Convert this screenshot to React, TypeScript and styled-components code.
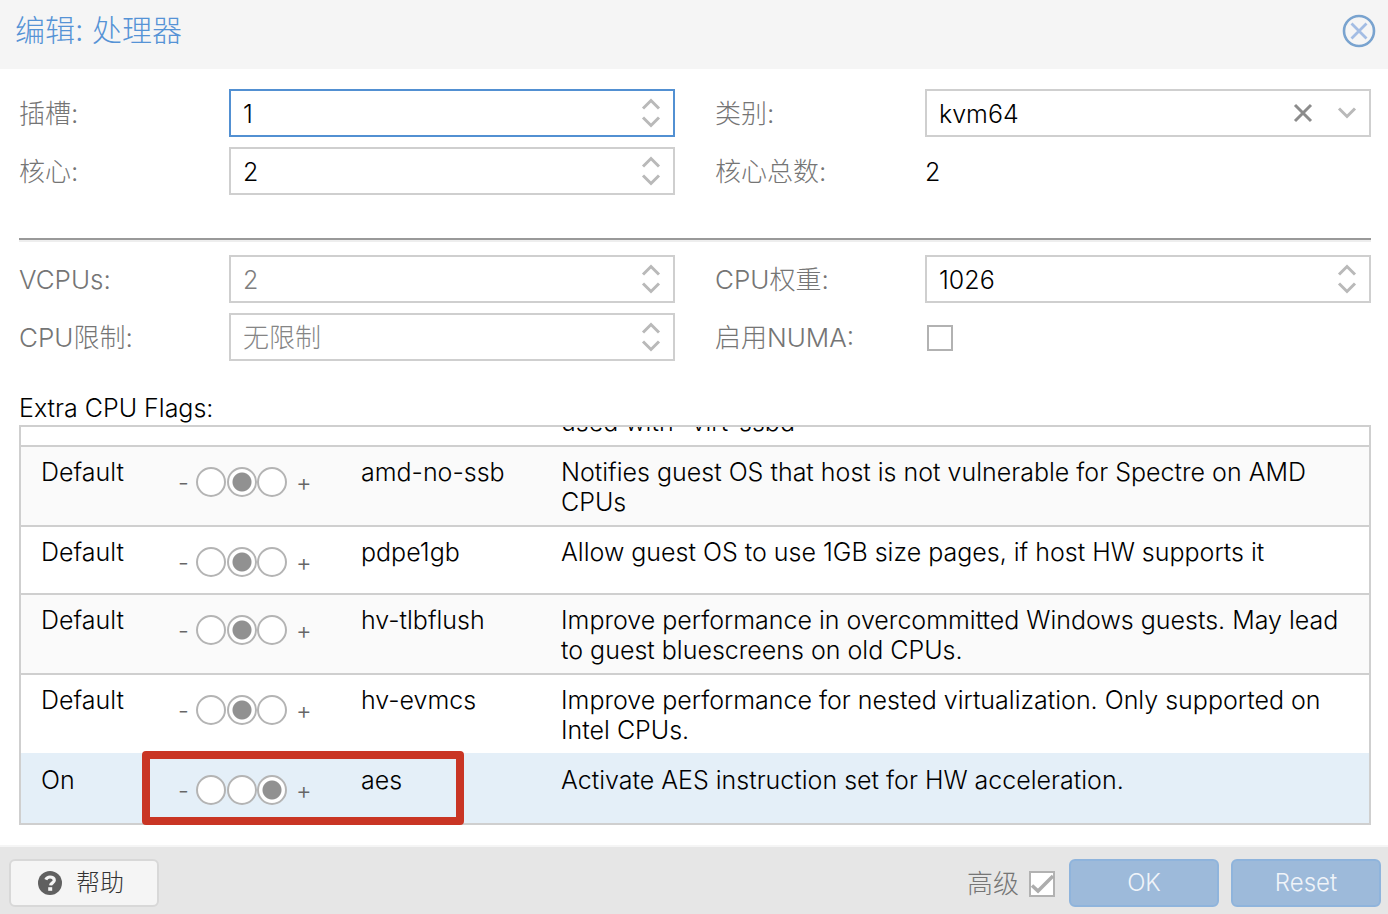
import React, { useState } from "react";
import styled, { createGlobalStyle } from "styled-components";

const GlobalStyle = createGlobalStyle`
  *, *::before, *::after { box-sizing: border-box; }
  body {
    margin: 0;
    background: #fff;
    color: #000;
    font-family: Inter, "Noto Sans CJK SC", sans-serif;
    font-size: 25px;
    font-weight: 300;
    line-height: 30px;
  }
  input, button { font: inherit; color: inherit; margin: 0; }
`;

const Dialog = styled.main`
  display: flex;
  flex-direction: column;
  min-height: 100vh;
`;

const Header = styled.header`
  display: flex;
  justify-content: space-between;
  align-items: flex-start;
  height: 69px;
  padding: 14px 12px 0 15px;
  background: #f5f5f5;
`;

const Title = styled.h1`
  margin: 0;
  font-size: 30px;
  font-weight: 300;
  line-height: 32px;
  color: #5593d6;
`;

const IconButton = styled.button`
  display: flex;
  padding: 0;
  border: 0;
  background: none;
`;

const Body = styled.div`
  flex: 1;
  padding: 20px 17px 20px 19px;
`;

const FieldGrid = styled.div`
  display: grid;
  grid-template-columns: repeat(2, minmax(0, 1fr));
  gap: 10px 40px;
`;

const Field = styled.div`
  display: flex;
  align-items: center;
  height: 48px;
`;

const FieldLabel = styled.label`
  flex: none;
  width: 210px;
  padding-top: 2px;
  font-size: 26px;
  color: #757575;
`;

const InputBox = styled.div<{ $focused?: boolean }>`
  display: flex;
  align-items: center;
  flex: 1;
  min-width: 0;
  height: 48px;
  padding: 0 12px;
  border: 2px solid ${(p) => (p.$focused ? "#5290d2" : "#cfcfcf")};
`;

const TextInput = styled.input<{ $muted?: boolean }>`
  flex: 1;
  min-width: 0;
  padding: 2px 0 0;
  border: 0;
  outline: 0;
  background: none;
  color: ${(p) => (p.$muted ? "#7f7f7f" : "#000")};
  &::placeholder {
    color: #858585;
    font-size: 26px;
    opacity: 1;
  }
`;

const Total = styled.output`
  padding-top: 2px;
`;

const SpinButtons = styled.div`
  display: flex;
  flex-direction: column;
  gap: 6px;
`;

const Trigger = styled(IconButton)`
  margin-left: 24px;
`;

const Rule = styled.hr`
  margin: 43px 0 13px;
  border: 0;
  border-top: 2px solid #999;
  border-bottom: 2px solid #eee;
`;

const CheckBox = styled.input`
  appearance: none;
  display: grid;
  place-items: center;
  width: 26px;
  height: 26px;
  border: 2px solid #b2b2b2;
  background: #fff;
`;

const NumaCheck = styled(CheckBox)`
  margin: 2px 0 0 2px;
`;

const FlagsTitle = styled.h2`
  margin: 32px 0 2px;
  font-size: 25px;
  font-weight: 300;
  line-height: 30px;
`;

const FlagsFrame = styled.div`
  position: relative;
`;

const FlagsViewport = styled.div`
  display: flex;
  align-items: flex-end;
  height: 400px;
  border: 2px solid #cfcfcf;
  overflow: hidden;
`;

const FlagsTable = styled.table`
  flex: 1;
  table-layout: fixed;
  width: 100%;
  border-spacing: 0;
`;

const FlagRow = styled.tr<{ $shaded?: boolean; $line: string; $selected?: boolean }>`
  background: ${(p) => (p.$selected ? "#e4eff8" : p.$shaded ? "#fafafa" : "#fff")};
  & > td { border-bottom: ${(p) => p.$line}; }
`;

const Cell = styled.td`
  height: 68px;
  padding: 10px 20px 8px;
  vertical-align: top;
`;

const TailCell = styled(Cell)`
  vertical-align: bottom;
`;

const StateSwitch = styled.div`
  display: flex;
  align-items: center;
  height: 30px;
  margin: 10px -20px 0 -3px;
  color: #666;
`;

const Sign = styled.span`
  width: 18px;
  padding-top: 2px;
  font-size: 24px;
`;

const PlusSign = styled(Sign)`
  margin-left: 9px;
`;

const RadioGroup = styled.span`
  display: flex;
  width: 91px;
  justify-content: space-between;
`;

const Radio = styled.input`
  appearance: none;
  width: 30px;
  height: 30px;
  border: 2px solid #b4b4b4;
  border-radius: 50%;
  background: #fff;
  &:checked { background: radial-gradient(circle, #919191 9px, #fff 10px); }
`;

const Highlight = styled.div`
  position: absolute;
  left: 123px;
  bottom: 0;
  width: 322px;
  height: 74px;
  border: 8px solid #c93524;
  border-radius: 4px;
  pointer-events: none;
`;

const Footer = styled.footer`
  display: flex;
  align-items: center;
  height: 69px;
  padding: 5px 7px 0 9px;
  border-top: 2px solid #f5f5f5;
  background: #e6e6e6;
`;

const HelpButton = styled.button`
  display: flex;
  align-items: center;
  justify-content: center;
  gap: 14px;
  width: 150px;
  height: 48px;
  margin-right: auto;
  padding: 0 6px 0 0;
  border: 2px solid #d8d8d8;
  border-radius: 6px;
  background: #f5f5f5;
  color: #333;
  font-size: 24px;
`;

const AdvancedLabel = styled.label`
  display: flex;
  align-items: center;
  gap: 10px;
  margin-right: 2px;
  padding-top: 2px;
  color: #757575;
  font-size: 26px;
`;

const PrimaryButton = styled.button`
  width: 150px;
  height: 48px;
  margin-left: 12px;
  padding: 0;
  border: 2px solid #8fb4dc;
  border-radius: 6px;
  background: #9dbada;
  color: #f0f4f9;
  font-size: 24px;
`;

const CheckWrap = styled.span`
  display: grid;
  & > * { grid-area: 1 / 1; }
  & > svg { pointer-events: none; }
`;

function Chevron({ up, color = "#b9b9b9" }: { up?: boolean; color?: string }) {
  return (
    <svg width="20" height="12" viewBox="0 0 20 12" fill="none" stroke={color} strokeWidth="3">
      <path d={up ? "M2 10.5 10 2.5 18 10.5" : "M2 1.5 10 9.5 18 1.5"} />
    </svg>
  );
}

type SpinnerProps = {
  id: string;
  label: string;
  value?: string;
  placeholder?: string;
  focused?: boolean;
  muted?: boolean;
};

function SpinnerField({ id, label, value = "", placeholder, focused, muted }: SpinnerProps) {
  return (
    <Field>
      <FieldLabel htmlFor={id}>{label}</FieldLabel>
      <InputBox $focused={focused}>
        <TextInput id={id} defaultValue={value} placeholder={placeholder} $muted={muted} />
        <SpinButtons>
          <IconButton type="button" aria-label="+"><Chevron up /></IconButton>
          <IconButton type="button" aria-label="-"><Chevron /></IconButton>
        </SpinButtons>
      </InputBox>
    </Field>
  );
}

const states = ["Off", "Default", "On"];

const line = "2px solid #cfcfcf";

const initialFlags = [
  { name: "amd-no-ssb", state: 1, text: "Notifies guest OS that host is not vulnerable for Spectre on AMD CPUs" },
  { name: "pdpe1gb", state: 1, text: "Allow guest OS to use 1GB size pages, if host HW supports it" },
  { name: "hv-tlbflush", state: 1, text: "Improve performance in overcommitted Windows guests. May lead to guest bluescreens on old CPUs." },
  { name: "hv-evmcs", state: 1, text: "Improve performance for nested virtualization. Only supported on Intel CPUs." },
  { name: "aes", state: 2, text: "Activate AES instruction set for HW acceleration." },
];

function rowLine(index: number) {
  const last = initialFlags.length - 1;
  if (index === last) return "0";
  return index === last - 1 ? "2px solid #e4eff8" : line;
}

export default function App() {
  const [flags, setFlags] = useState(initialFlags);
  const setState = (name: string, state: number) =>
    setFlags((all) => all.map((f) => (f.name === name ? { ...f, state } : f)));

  return (
    <Dialog>
      <GlobalStyle />
      <Header>
        <Title>编辑: 处理器</Title>
        <IconButton type="button" aria-label="关闭">
          <svg width="34" height="34" viewBox="0 0 34 34" fill="none">
            <circle cx="17" cy="17" r="15" stroke="#79a3cf" strokeWidth="2.6" />
            <path d="M9.5 9.5 24.5 24.5M24.5 9.5 9.5 24.5" stroke="#a3bde4" strokeWidth="2.8" />
          </svg>
        </IconButton>
      </Header>
      <Body>
        <FieldGrid>
          <SpinnerField id="sockets" label="插槽:" value="1" focused />
          <Field>
            <FieldLabel htmlFor="cputype">类别:</FieldLabel>
            <InputBox>
              <TextInput id="cputype" defaultValue="kvm64" />
              <IconButton type="button" aria-label="清除">
                <svg width="20" height="20" viewBox="0 0 20 20" fill="none" stroke="#8c8c8c" strokeWidth="3">
                  <path d="M2 2 18 18M18 2 2 18" />
                </svg>
              </IconButton>
              <Trigger type="button" aria-label="展开"><Chevron /></Trigger>
            </InputBox>
          </Field>
          <SpinnerField id="cores" label="核心:" value="2" />
          <Field>
            <FieldLabel as="span">核心总数:</FieldLabel>
            <Total>2</Total>
          </Field>
        </FieldGrid>
        <Rule />
        <FieldGrid>
          <SpinnerField id="vcpus" label="VCPUs:" value="2" muted />
          <SpinnerField id="cpuunits" label="CPU权重:" value="1026" />
          <SpinnerField id="cpulimit" label="CPU限制:" placeholder="无限制" />
          <Field>
            <FieldLabel htmlFor="numa">启用NUMA:</FieldLabel>
            <NumaCheck id="numa" type="checkbox" />
          </Field>
        </FieldGrid>
        <FlagsTitle>Extra CPU Flags:</FlagsTitle>
        <FlagsFrame>
          <FlagsViewport>
            <FlagsTable>
              <colgroup>
                <col style={{ width: 140 }} />
                <col style={{ width: 180 }} />
                <col style={{ width: 200 }} />
                <col />
              </colgroup>
              <tbody>
                <FlagRow $line={line}>
                  <TailCell colSpan={3} />
                  <TailCell>used with "virt-ssbd"</TailCell>
                </FlagRow>
                {flags.map((flag, i) => (
                  <FlagRow key={flag.name} $shaded={i % 2 === 0} $selected={flag.name === "aes"} $line={rowLine(i)}>
                    <Cell>{states[flag.state]}</Cell>
                    <Cell>
                      <StateSwitch role="radiogroup" aria-label={flag.name}>
                        <Sign>-</Sign>
                        <RadioGroup>
                          {states.map((s, n) => (
                            <Radio
                              key={s}
                              type="radio"
                              name={flag.name}
                              aria-label={s}
                              checked={flag.state === n}
                              onChange={() => setState(flag.name, n)}
                            />
                          ))}
                        </RadioGroup>
                        <PlusSign>+</PlusSign>
                      </StateSwitch>
                    </Cell>
                    <Cell>{flag.name}</Cell>
                    <Cell>{flag.text}</Cell>
                  </FlagRow>
                ))}
              </tbody>
            </FlagsTable>
          </FlagsViewport>
          <Highlight />
        </FlagsFrame>
      </Body>
      <Footer>
        <HelpButton type="button">
          <svg width="24" height="24" viewBox="0 0 24 24">
            <circle cx="12" cy="12" r="12" fill="#606060" />
            <path d="M7.8 8.6C8.6 6.9 10 6 12 6c2.400 0 4.300 1.300 4.300 3.300 0 2.500-3.500 2.500-3.700 5" fill="none" stroke="#f5f5f5" strokeWidth="3.200" />
            <rect x="10.200" y="16.200" width="4" height="3.600" fill="#f5f5f5" />
          </svg>
          帮助
        </HelpButton>
        <AdvancedLabel>
          高级
          <CheckWrap>
            <CheckBox type="checkbox" defaultChecked />
            <svg width="26" height="26" viewBox="0 0 26 26" fill="none">
              <path d="M3 14.500 9 20 24 5" stroke="#adadad" strokeWidth="3.500" />
            </svg>
          </CheckWrap>
        </AdvancedLabel>
        <PrimaryButton type="button">OK</PrimaryButton>
        <PrimaryButton type="button">Reset</PrimaryButton>
      </Footer>
    </Dialog>
  );
}
